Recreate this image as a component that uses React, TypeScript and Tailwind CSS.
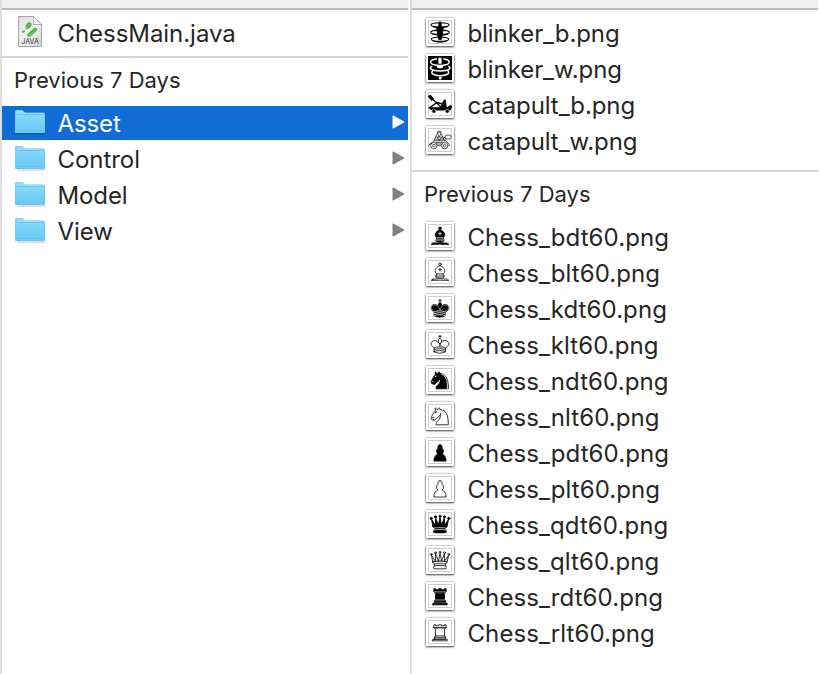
import React from "react";

const ink = { stroke: "#000", strokeWidth: 1.5, strokeLinecap: "round", strokeLinejoin: "round" } as const;

type PieceProps = { dark?: boolean };

function Bishop({ dark }: PieceProps) {
  return (
    <g {...ink} fill={dark ? "#000" : "#fff"}>
      <path d="M9 36c3.39-.97 10.11.43 13.5-2 3.39 2.43 10.11 1.03 13.5 2 0 0 1.65.54 3 2-.68.97-1.65.99-3 .5-3.39-.97-10.11.46-13.5-1-3.39 1.46-10.11.03-13.5 1-1.35.49-2.32.47-3-.5 1.35-1.94 3-2 3-2z" />
      <path d="M15 32c2.5 2.5 12.5 2.5 15 0 .5-1.5 0-2 0-2 0-2.5-2.5-4-2.5-4 5.5-1.5 6-11.5-5-15.5-11 4-10.500 14-5 15.500 0 0-2.500 1.500-2.500 4 0 0-.5.5 0 2z" />
      <path d="M25 8a2.500 2.500 0 1 1-5 0 2.500 2.500 0 1 1 5 0z" />
      <path d="M17.500 26h10M15 30h15m-7.500-14.500v5M20 18h5" fill="none" stroke={dark ? "#fff" : "#000"} />
    </g>
  );
}

function King({ dark }: PieceProps) {
  return (
    <g {...ink} fill={dark ? "#000" : "#fff"}>
      <path d="M22.500 11.630V6M20 8h5" />
      <path d="M22.500 25s4.500-7.500 3-10.500c0 0-1-2.500-3-2.500s-3 2.500-3 2.500c-1.500 3 3 10.500 3 10.500" />
      <path d="M11.500 37c5.500 3.500 15.500 3.500 21 0v-7s9-4.500 6-10.500c-4-6.500-13.500-3.500-16 4V27v-3.500c-3.500-7.500-13-10.500-16-4-3 6 5 10 5 10V37z" />
      {dark && <path d="M32 29.500s8.500-4 6.030-9.650C34.150 14 25 18 22.500 24.500v2.100-2.100C20 18 9.900 14 7 19.850c-2.500 5.650 4.850 9 4.850 9" fill="none" stroke="#ddd" strokeWidth="1" />}
      <path d="M11.500 30c5.500-3 15.500-3 21 0m-21 3.500c5.500-3 15.500-3 21 0m-21 3.500c5.500-3 15.500-3 21 0" fill="none" stroke={dark ? "#fff" : "#000"} />
    </g>
  );
}

function Knight({ dark }: PieceProps) {
  const detail = dark ? "#fff" : "#000";
  return (
    <g {...ink} fill={dark ? "#000" : "#fff"}>
      <path d="M22 10c10.500 1 16.500 8 16 29H15c0-9 10-6.500 8-21" />
      <path d="M24 18c.38 2.910-5.550 7.370-8 9-3 2-2.820 4.340-5 4-1.042-.94 1.410-3.040 0-3-1 0 .19 1.230-1 2-1 0-4.003 1-4-4 0-2 6-12 6-12s1.890-1.900 2-3.500c-.73-.994-.5-2-.5-3 1-1 3 2.500 3 2.500h2s.78-1.992 2.500-3c1 0 1 3 1 3" />
      <path d="M9.500 25.500a.5.5 0 1 1-1 0 .5.5 0 1 1 1 0zM14.930 15.750a.5 1.500 30 1 1-.866-.5.5 1.500 30 1 1 .866.5z" fill={detail} stroke={detail} strokeWidth={dark ? 0.8 : 1.5} />
      {dark && <path d="M24.550 10.400l-.45 1.450.5.15c3.150 1 5.650 2.490 7.900 6.750S35.750 29.060 35.250 39l-.05.5h2.250l.05-.5c.5-10.060-.88-16.850-3.250-21.340-2.370-4.490-5.790-6.640-9.190-7.160z" fill="#bbb" stroke="none" />}
    </g>
  );
}

function Pawn({ dark }: PieceProps) {
  return (
    <path
      {...ink}
      fill={dark ? "#000" : "#fff"}
      d="M22.500 9c-2.210 0-4 1.790-4 4 0 .89.290 1.710.78 2.380C17.330 16.500 16 18.590 16 21c0 2.030.94 3.840 2.410 5.030-3 1.060-7.410 5.550-7.410 13.470h23c0-7.920-4.410-12.410-7.410-13.470 1.470-1.190 2.410-3 2.410-5.030 0-2.410-1.330-4.500-3.280-5.620.49-.67.78-1.490.78-2.380 0-2.210-1.790-4-4-4z"
    />
  );
}

function Queen({ dark }: PieceProps) {
  const r = dark ? 2.1 : 1.6;
  return (
    <g {...ink} fill={dark ? "#000" : "#fff"}>
      <circle cx="6" cy="12" r={r} />
      <circle cx="14" cy="9" r={r} />
      <circle cx="22.500" cy="8" r={r} />
      <circle cx="31" cy="9" r={r} />
      <circle cx="39" cy="12" r={r} />
      <path d="M9 26c8.500-1.500 21-1.500 27 0l2.500-12.500L31 25l-.3-14.100-5.200 13.600-3-14.500-3 14.500-5.200-13.600L14 25 6.500 13.500 9 26z" />
      <path d="M9 26c0 2 1.500 2 2.500 4 1 1.500 1 1 .5 3.500-1.500 1-1.500 2.500-1.500 2.500-1.500 1.500.5 2.500.5 2.500 6.500 1 16.500 1 23 0 0 0 1.500-1 0-2.500 0 0 .5-1.500-1-2.500-.5-2.500-.5-2 .5-3.500 1-2 2.500-2 2.500-4-8.500-1.500-18.500-1.500-27 0z" />
      <path d="M11.500 30c3.500-1 18.500-1 22 0M12 33.500c6-1 15-1 21 0" fill="none" stroke={dark ? "#ddd" : "#000"} />
    </g>
  );
}

function Rook({ dark }: PieceProps) {
  return (
    <g {...ink} fill={dark ? "#000" : "#fff"}>
      <path d="M9 39h27v-3H9v3zM12 36v-4h21v4H12zM11 14V9h4v2h5V9h5v2h5V9h4v5" />
      <path d="M34 14l-3 3H14l-3-3" />
      <path d="M31 17v12.500H14V17" />
      <path d="M31 29.500l1.500 2.500h-20l1.500-2.500M11 14h23" />
      {dark && <path d="M12 35.500h21M13 31.500h19M14 29.500h17M14 16.500h17M11 14h23" stroke="#aaa" strokeWidth="1" />}
    </g>
  );
}

function BlinkerBlack() {
  return (
    <g fill="none" stroke="#000">
      <ellipse cx="22.500" cy="9" rx="17" ry="4" strokeWidth="2" />
      <ellipse cx="22.500" cy="23" rx="17.500" ry="4" strokeWidth="2" />
      <ellipse cx="22.500" cy="36" rx="16" ry="4" strokeWidth="2" />
      <path d="M20 5q2.500-4 5 0v6l4 4-2 12-2 10h-5l-2-10-2-12 4-4z" fill="#000" />
      <path d="M8 12q14 5 29 0M7 26q15 5 31 0M9 39q14 5 27 0" strokeWidth="2" />
    </g>
  );
}

function BlinkerWhite() {
  return (
    <g fill="none" stroke="#fff">
      <path d="M0 0h45v45H0z" fill="#000" stroke="none" />
      <path d="M17 5C3 7 2 13 10 16q12 4 25 0c8-3 6-9-6-11" strokeWidth="2.800" />
      <path d="M20 5q2.500-4 5 0v9h-5z" fill="#fff" />
      <path d="M8 19c-8 3-3 9 15 9s22-6 15-9M9 28c-5 4 1 9 14 9s19-5 14-9" strokeWidth="2.800" />
      <path d="M16 18h13l-2 5h-9zM20 39h6l-1 5h-4z" fill="#fff" stroke="none" />
    </g>
  );
}

function CatapultBlack() {
  return (
    <g fill="none" stroke="#000" strokeWidth="2.500">
      <path d="M1 8l4-1 5 6-3 2z" fill="#000" />
      <path d="M6 11l19 18M1 31l15-11M14 19l12 3" />
      <path d="M30 15l-4 8-4 8h13l-2-16z" fill="#000" strokeWidth="1" />
      <path d="M3 29h33l6-4 3 2-3 7H14l-9-1z" fill="#000" strokeWidth="1" />
      <circle cx="11" cy="36" r="3.700" fill="#000" stroke="#fff" strokeWidth="1" />
      <circle cx="36" cy="36" r="3.700" fill="#000" stroke="#fff" strokeWidth="1" />
    </g>
  );
}

function CatapultWhite() {
  return (
    <g fill="none" stroke="#222" strokeWidth="1.400">
      <circle cx="11" cy="33" r="6" />
      <circle cx="11" cy="33" r="2.500" />
      <circle cx="31" cy="33" r="6" />
      <circle cx="31" cy="33" r="2.500" />
      <path d="M1 33l10-9h22l7 6v3h-3M17 33h8M11 24l7-15h6l7 15M15 17h13M13 21h17M18 9V6h6v3M18 11l3 6 3-6M17 17l4 7 5-7M15 27h12M14 30h13M28 19l5-2" />
      <ellipse cx="37.500" cy="17" rx="6" ry="4" />
      <path d="M2 31l6-3M34 22l-4 2" />
    </g>
  );
}

function Thumbnail({ children, solid }: { children: React.ReactNode; solid?: boolean }) {
  return (
    <span className="mb-[2px] flex h-[28px] w-[28px] shrink-0 items-center justify-center bg-white shadow-[0_1px_2px_rgba(0,0,0,0.65),0_0_2px_rgba(0,0,0,0.4)]">
      <span className={solid ? "flex h-6 w-6 items-center justify-center bg-black" : "flex h-6 w-6 items-center justify-center border border-[#cecece]"}>
        <svg viewBox="0 0 45 45" className="h-6 w-6 shrink-0">{children}</svg>
      </span>
    </span>
  );
}

function JavaFile() {
  return (
    <svg viewBox="0 0 26 34" className="mb-[2px] h-[34px] w-[26px]">
      <defs>
        <linearGradient id="paper" x1="0" y1="0" x2="1" y2="1">
          <stop offset="0" stopColor="#dedede" />
          <stop offset=".5" stopColor="#f2f2f2" />
          <stop offset="1" stopColor="#d4d4d4" />
        </linearGradient>
      </defs>
      <path d="M1.500 1.500h15l8 8v22h-23z" fill="url(#paper)" stroke="#a3a3a3" />
      <path d="M16.500 1.500v8h8z" fill="#fff" stroke="#a0a0a0" strokeWidth=".8" />
      <path d="M10 19.500l7-6.500q3-1 3.500 2l-7 6.500q-3 1-3.500-2zM8.500 11.500q1-4 4-4.500 3 1 2 3.500-2 3.500-5 4zM4.500 16.500l3-1.500.5 2-2.500 1z" fill="#50b547" />
      <path d="M8 14l5-5M12 20.500l7-6" stroke="#83cd70" strokeWidth="1" />
      <text x="13" y="29.300" textAnchor="middle" textLength="17.500" lengthAdjust="spacingAndGlyphs" fontSize="7.200" fill="#333" fontFamily="Inter, sans-serif">JAVA</text>
    </svg>
  );
}

function Folder() {
  return (
    <svg viewBox="0 0 32 28" className="h-7 w-8">
      <defs>
        <linearGradient id="folder" x1="0" y1="0" x2="0" y2="1">
          <stop offset="0" stopColor="#85d8fa" />
          <stop offset="1" stopColor="#6acaf5" />
        </linearGradient>
      </defs>
      <path d="M3 25h28" stroke="#000" strokeOpacity=".25" />
      <path d="M3 2.500Q3 1 4.500 1h5.500l3 2.500h18.500Q33 3.500 33 5v18q0 1-1 1H4q-1 0-1-1z" transform="translate(-2)" fill="#6dc3eb" />
      <path d="M1.500 2q0-.5 1-.5h5.500L11 4h19.500v2h-29z" fill="#91dcfa" />
      <path d="M1.500 5.500h29V23h-29z" fill="url(#folder)" />
      <path d="M1.500 5.500h29" stroke="#6bbfe5" strokeWidth=".8" />
      <path d="M1.500 21.500h29" stroke="#63bfe9" strokeWidth=".8" />
    </svg>
  );
}

const folders = [
  { name: "Asset", selected: true, spacing: "tracking-[-0.1px]" },
  { name: "Control", selected: false, spacing: "tracking-[-0.05px]" },
  { name: "Model", selected: false, spacing: "tracking-[-0.1px]" },
  { name: "View", selected: false, spacing: "tracking-[-0.1px]" },
];

const recent = [
  { name: "blinker_b.png", art: <BlinkerBlack />, solid: false },
  { name: "blinker_w.png", art: <BlinkerWhite />, solid: true },
  { name: "catapult_b.png", art: <CatapultBlack />, solid: false },
  { name: "catapult_w.png", art: <CatapultWhite />, solid: false },
];

const pieces = [
  { name: "Chess_bdt60.png", art: <Bishop dark /> },
  { name: "Chess_blt60.png", art: <Bishop /> },
  { name: "Chess_kdt60.png", art: <King dark /> },
  { name: "Chess_klt60.png", art: <King /> },
  { name: "Chess_ndt60.png", art: <Knight dark /> },
  { name: "Chess_nlt60.png", art: <Knight /> },
  { name: "Chess_pdt60.png", art: <Pawn dark /> },
  { name: "Chess_plt60.png", art: <Pawn /> },
  { name: "Chess_qdt60.png", art: <Queen dark /> },
  { name: "Chess_qlt60.png", art: <Queen /> },
  { name: "Chess_rdt60.png", art: <Rook dark /> },
  { name: "Chess_rlt60.png", art: <Rook /> },
];

function FileRow({ name, art, solid }: { name: string; art: React.ReactNode; solid?: boolean }) {
  return (
    <li className="flex h-9 items-center pl-[14px]">
      <Thumbnail solid={solid}>{art}</Thumbnail>
      <span className="ml-[13.5px] pt-[2px]">{name}</span>
    </li>
  );
}

export default function App() {
  return (
    <div className="flex h-[674px] w-[820px] overflow-hidden bg-white pr-[2px] font-['Inter',sans-serif] text-[24px] leading-9 whitespace-nowrap text-[#262626]">
      <section className="w-[410px] shrink-0 border-l-2 border-[#dedede] pr-[2px]">
        <div className="h-[10px] border-b-2 border-[#bebebe] bg-[#efefef]" />
        <div className="flex h-12 items-center border-b-2 border-[#d5d5d5] pl-[15px]">
          <JavaFile />
          <span className="ml-[14.5px] pt-[2px] tracking-[-0.05px]">ChessMain.java</span>
        </div>
        <h2 className="h-12 pl-3 pt-1 text-[22px]">Previous 7 Days</h2>
        <ul className="flex flex-col gap-[2px]">
          {folders.map((f) => (
            <li key={f.name} className={f.selected ? "flex h-[34px] items-center bg-[#116cd6] pl-3 pr-[3px] text-white" : "flex h-[34px] items-center pl-3 pr-[3px]"}>
              <Folder />
              <span className={`ml-[11.5px] flex-1 pt-[2px] ${f.spacing}`}>{f.name}</span>
              <svg viewBox="0 0 13 14" className="mb-[2px] h-[14px] w-[13px]">
                <path d="M1 .8v12.400L12 7z" fill={f.selected ? "#fff" : "#808080"} stroke={f.selected ? "#fff" : "#808080"} strokeLinejoin="round" />
              </svg>
            </li>
          ))}
        </ul>
      </section>
      <section className="flex-1 border-l-2 border-[#dedede]">
        <div className="h-[10px] border-b-2 border-[#bebebe] bg-[#efefef]" />
        <ul className="h-[162px] border-b-2 border-[#d5d5d5] pt-[5px] tracking-[-0.08px]">
          {recent.map((f) => <FileRow key={f.name} {...f} />)}
        </ul>
        <h2 className="h-[47px] pl-3 pt-1 text-[22px]">Previous 7 Days</h2>
        <ul className="tracking-[0.08px]">
          {pieces.map((f) => <FileRow key={f.name} {...f} />)}
        </ul>
      </section>
    </div>
  );
}
